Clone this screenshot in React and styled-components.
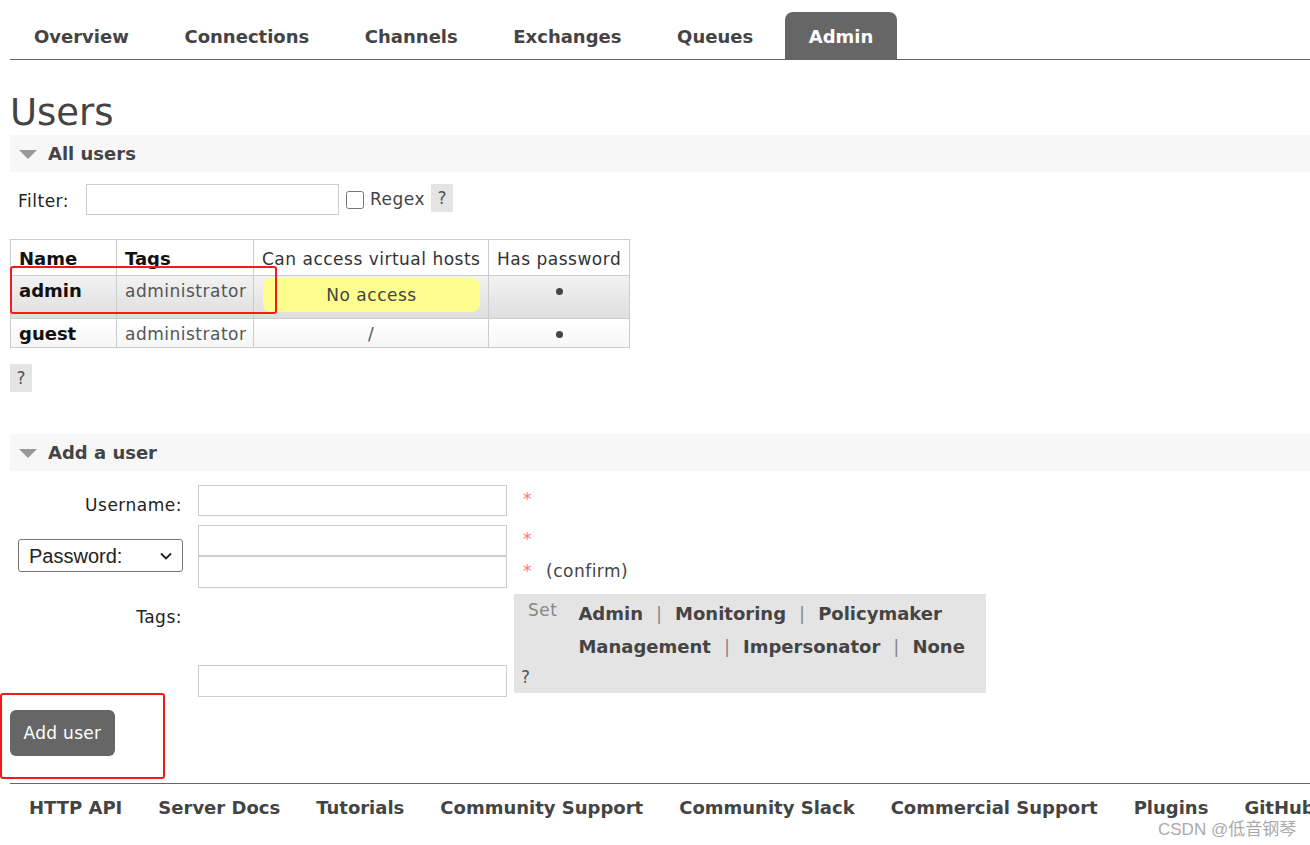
import React from "react";
import styled, { createGlobalStyle } from "styled-components";

const GlobalStyle = createGlobalStyle`
  html, body { margin: 0; padding: 0; background: #fff; }
  body {
    font-family: "DejaVu Sans", Verdana, sans-serif;
    color: #484848;
    overflow: hidden;
    width: 1310px;
    height: 845px;
  }
`;

const tabs = ["Overview", "Connections", "Channels", "Exchanges", "Queues", "Admin"];
const footerLinks = [
  "HTTP API",
  "Server Docs",
  "Tutorials",
  "Community Support",
  "Community Slack",
  "Commercial Support",
  "Plugins",
  "GitHub",
];
const users = [
  { name: "admin", tags: "administrator", vhosts: null, highlight: true },
  { name: "guest", tags: "administrator", vhosts: "/", highlight: false },
];
const tagRows = [
  ["Admin", "Monitoring", "Policymaker"],
  ["Management", "Impersonator", "None"],
];

const App = () => {
  return (
    <Page>
      <GlobalStyle />
      <Nav>
        {tabs.map((t) => (
          <Tab key={t} $active={t === "Admin"}>{t}</Tab>
        ))}
      </Nav>

      <Title>Users</Title>

      <SectionHeader>
        <Caret />
        All users
      </SectionHeader>

      <FilterRow>
        <FilterLabel>Filter:</FilterLabel>
        <TextInput $w={253} $h={31} />
        <Check type="checkbox" />
        <RegexLabel>Regex</RegexLabel>
        <Help>?</Help>
      </FilterRow>

      <UsersTable>
        <colgroup>
          <col style={{ width: 106 }} />
          <col style={{ width: 137 }} />
          <col style={{ width: 235 }} />
          <col style={{ width: 141 }} />
        </colgroup>
        <thead>
          <HeadRow>
            <Th $bold>Name</Th>
            <Th $bold>Tags</Th>
            <Th>Can access virtual hosts</Th>
            <Th>Has password</Th>
          </HeadRow>
        </thead>
        <tbody>
          {users.map((u) => (
            <Row key={u.name} $highlight={u.highlight}>
              <NameCell>{u.name}</NameCell>
              <Td>{u.tags}</Td>
              <Td $center $tight={!u.vhosts}>
                {u.vhosts ? u.vhosts : <NoAccess>No access</NoAccess>}
              </Td>
              <Td $center>
                <Dot />
              </Td>
            </Row>
          ))}
        </tbody>
      </UsersTable>

      <HelpBlock>
        <Help>?</Help>
      </HelpBlock>

      <SectionHeader $top={42}>
        <Caret />
        Add a user
      </SectionHeader>

      <Form>
        <FormLabel $pad={10}>Username:</FormLabel>
        <InputCol>
          <TextInput $w={309} $h={31} />
        </InputCol>
        <ReqStack>
          <Required>*</Required>
        </ReqStack>

        <SelectWrap>
          <Select defaultValue="password">
            <option value="password">Password:</option>
          </Select>
          <Chevron viewBox="0 0 12 8">
            <polyline points="1,1.5 6,6.5 11,1.5" />
          </Chevron>
        </SelectWrap>
        <InputCol>
          <TextInput $w={309} $h={31} />
          <TextInput $w={309} $h={32} />
        </InputCol>
        <ReqStack>
          <Required>*</Required>
          <Required>
            * <Confirm>(confirm)</Confirm>
          </Required>
        </ReqStack>

        <FormLabel $pad={10}>Tags:</FormLabel>
        <TagsCol>
          <TextInput $w={309} $h={32} />
        </TagsCol>
        <TagBox>
          <TagLines>
            <SetLabel>Set</SetLabel>
            <TagLinks>
              {tagRows.map((row, i) => (
                <TagRow key={i}>
                  {row.map((t, j) => (
                    <React.Fragment key={t}>
                      {j > 0 && <Sep>|</Sep>}
                      <TagLink>{t}</TagLink>
                    </React.Fragment>
                  ))}
                </TagRow>
              ))}
            </TagLinks>
          </TagLines>
          <TagHelp>?</TagHelp>
        </TagBox>
      </Form>

      <Submit>Add user</Submit>

      <Footer>
        {footerLinks.map((l) => (
          <FooterLink key={l}>{l}</FooterLink>
        ))}
      </Footer>

      <Annotation style={{ left: 10, top: 266, width: 267, height: 48 }} />
      <Annotation style={{ left: 0, top: 693, width: 165, height: 86 }} />
      <Watermark>CSDN @低音钢琴</Watermark>
    </Page>
  );
};

export default App;

const Page = styled.div`
  position: relative;
  padding-left: 10px;
  width: 1300px;
  height: 845px;
`;

const Nav = styled.div`
  display: flex;
  gap: 7.6px;
  padding-top: 12px;
  border-bottom: 1px solid #666;
  white-space: nowrap;
`;

const Tab = styled.div`
  height: 47px;
  padding: 2px 24px 0;
  box-sizing: border-box;
  display: flex;
  align-items: center;
  font-size: 18px;
  font-weight: bold;
  color: ${(p) => (p.$active ? "#fff" : "#444")};
  background: ${(p) => (p.$active ? "#666" : "transparent")};
  border-radius: 8px 8px 0 0;
`;

const Title = styled.h1`
  margin: 0;
  padding-top: 31px;
  font-size: 37px;
  line-height: 44px;
  font-weight: normal;
  color: #444;
`;

const SectionHeader = styled.div`
  margin-top: ${(p) => (p.$top ? `${p.$top}px` : "0")};
  height: 37px;
  background: #f7f7f7;
  display: flex;
  align-items: center;
  font-size: 18px;
  font-weight: bold;
  color: #444;
  padding-left: 9px;
`;

const Caret = styled.span`
  width: 0;
  height: 0;
  border-left: 9px solid transparent;
  border-right: 9px solid transparent;
  border-top: 9px solid #999;
  margin-right: 11px;
  margin-top: 2px;
`;

const FilterRow = styled.div`
  display: flex;
  align-items: center;
  height: 31px;
  margin-top: 12px;
  padding-left: 8px;
  font-size: 17px;
  letter-spacing: 0.5px;
`;

const FilterLabel = styled.span`
  color: #222;
  margin-right: 17px;
  margin-top: 3px;
`;

const TextInput = styled.div`
  box-sizing: border-box;
  width: ${(p) => p.$w}px;
  height: ${(p) => p.$h}px;
  border: 1px solid #ccc;
  background: #fff;
`;

const Check = styled.input`
  width: 18px;
  height: 18px;
  margin: 0 6px 0 7px;
`;

const RegexLabel = styled.span`
  color: #444;
  margin-right: 6px;
  margin-top: -2px;
`;

const Help = styled.span`
  display: inline-flex;
  align-items: center;
  justify-content: center;
  width: 22px;
  height: 28px;
  background: #e4e4e4;
  color: #555;
  font-size: 17px;
  letter-spacing: 0;
  align-self: flex-start;
`;

const UsersTable = styled.table`
  margin-top: 24px;
  border-collapse: collapse;
  table-layout: fixed;
  width: 620px;
  font-size: 17px;
  letter-spacing: 0.5px;
`;

const HeadRow = styled.tr`
  height: 36px;
`;

const Th = styled.th`
  box-sizing: border-box;
  border: 1px solid #ccc;
  border-bottom: none;
  padding: 2px 8px 0;
  text-align: left;
  font-weight: ${(p) => (p.$bold ? "bold" : "normal")};
  font-size: ${(p) => (p.$bold ? "18px" : "17px")};
  letter-spacing: ${(p) => (p.$bold ? "0" : "0.5px")};
  color: ${(p) => (p.$bold ? "#111" : "#333")};
  white-space: nowrap;
  overflow: hidden;
  line-height: 20px;
  vertical-align: middle;
`;

const Row = styled.tr`
  height: ${(p) => (p.$highlight ? 43 : 29)}px;
  background: ${(p) =>
    p.$highlight
      ? "linear-gradient(#f2f2f2, #dedede)"
      : "linear-gradient(#ffffff, #f6f6f6)"};
`;

const Td = styled.td`
  box-sizing: border-box;
  border: 1px solid #ccc;
  padding: ${(p) => (p.$tight ? "2px 8px 5px" : "5px 8px 0")};
  line-height: 20px;
  color: #555;
  vertical-align: top;
  text-align: ${(p) => (p.$center ? "center" : "left")};
  white-space: nowrap;
  overflow: hidden;
`;

const NameCell = styled(Td)`
  font-weight: bold;
  color: #111;
  font-size: 18px;
  letter-spacing: 0;
`;

const Dot = styled.span`
  display: inline-block;
  width: 7px;
  height: 7px;
  border-radius: 50%;
  background: #444;
  margin-top: 7px;
  vertical-align: top;
`;

const NoAccess = styled.div`
  background: #fefe8e;
  border-radius: 8px;
  height: 34px;
  display: flex;
  align-items: center;
  justify-content: center;
  color: #444;
  margin-left: 1px;
`;

const HelpBlock = styled.div`
  margin-top: 16px;
  display: flex;
`;

const Form = styled.div`
  display: grid;
  grid-template-columns: 172px 309px auto;
  column-gap: 16px;
  row-gap: 9px;
  margin-top: 14px;
  font-size: 17px;
  letter-spacing: 0.5px;
  line-height: 20px;
  align-items: start;
`;

const FormLabel = styled.div`
  text-align: right;
  color: #222;
  padding-top: ${(p) => p.$pad}px;
`;

const InputCol = styled.div`
  display: flex;
  flex-direction: column;
`;

const ReqStack = styled.div`
  display: flex;
  flex-direction: column;
  gap: 12px;
  padding-top: 4px;
`;

const Required = styled.div`
  color: #f77;
  display: flex;
  align-items: baseline;
  gap: 14px;
`;

const Confirm = styled.span`
  color: #444;
`;

const SelectWrap = styled.div`
  position: relative;
  display: flex;
  margin-left: 8px;
  margin-top: 14px;
  width: 165px;
`;

const Select = styled.select`
  appearance: none;
  width: 165px;
  height: 33px;
  font-family: "Liberation Sans", Arial, sans-serif;
  font-size: 20px;
  letter-spacing: 0;
  color: #222;
  background: #fff;
  border: 1px solid #767676;
  border-radius: 3px;
  padding: 0 8px 0 10px;
`;

const Chevron = styled.svg`
  position: absolute;
  right: 11px;
  top: 13px;
  width: 12px;
  height: 8px;
  fill: none;
  stroke: #222;
  stroke-width: 1.8;
  pointer-events: none;
`;

const TagsCol = styled.div`
  padding-top: 68px;
  display: flex;
`;

const TagBox = styled.div`
  margin-left: -9px;
  margin-top: -3px;
  width: 472px;
  height: 99px;
  box-sizing: border-box;
  background: #e4e4e4;
  padding: 8px 7px 0 7px;
  display: flex;
  flex-direction: column;
`;

const TagLines = styled.div`
  display: flex;
  gap: 21px;
  padding-left: 7px;
`;

const SetLabel = styled.span`
  color: #888;
  margin-top: -2px;
`;

const TagLinks = styled.div`
  display: flex;
  flex-direction: column;
  gap: 9px;
  font-size: 18px;
  letter-spacing: 0;
  line-height: 24px;
`;

const TagRow = styled.div`
  display: flex;
`;

const TagLink = styled.span`
  font-weight: bold;
  color: #444;
`;

const Sep = styled.span`
  color: #888;
  margin: 0 13px;
`;

const TagHelp = styled.span`
  color: #555;
  margin-top: 8px;
`;

const Submit = styled.button`
  display: block;
  margin-top: 13px;
  width: 105px;
  height: 46px;
  background: #666;
  color: #fff;
  border: none;
  border-radius: 6px;
  font-family: "DejaVu Sans", Verdana, sans-serif;
  font-size: 17px;
  letter-spacing: 0.3px;
  padding: 0;
`;

const Footer = styled.div`
  margin-top: 27px;
  border-top: 1px solid #666;
  display: flex;
  gap: 36px;
  padding: 13px 0 0 19px;
  white-space: nowrap;
`;

const FooterLink = styled.span`
  font-size: 18px;
  font-weight: bold;
  color: #444;
`;

const Annotation = styled.div`
  position: absolute;
  box-sizing: border-box;
  border: 2px solid #f21b1b;
  border-radius: 3px;
`;

const Watermark = styled.div`
  position: absolute;
  left: 1158px;
  top: 815px;
  font-family: "Liberation Sans", "Noto Sans CJK SC", sans-serif;
  font-size: 17px;
  color: #aaa;
`;
